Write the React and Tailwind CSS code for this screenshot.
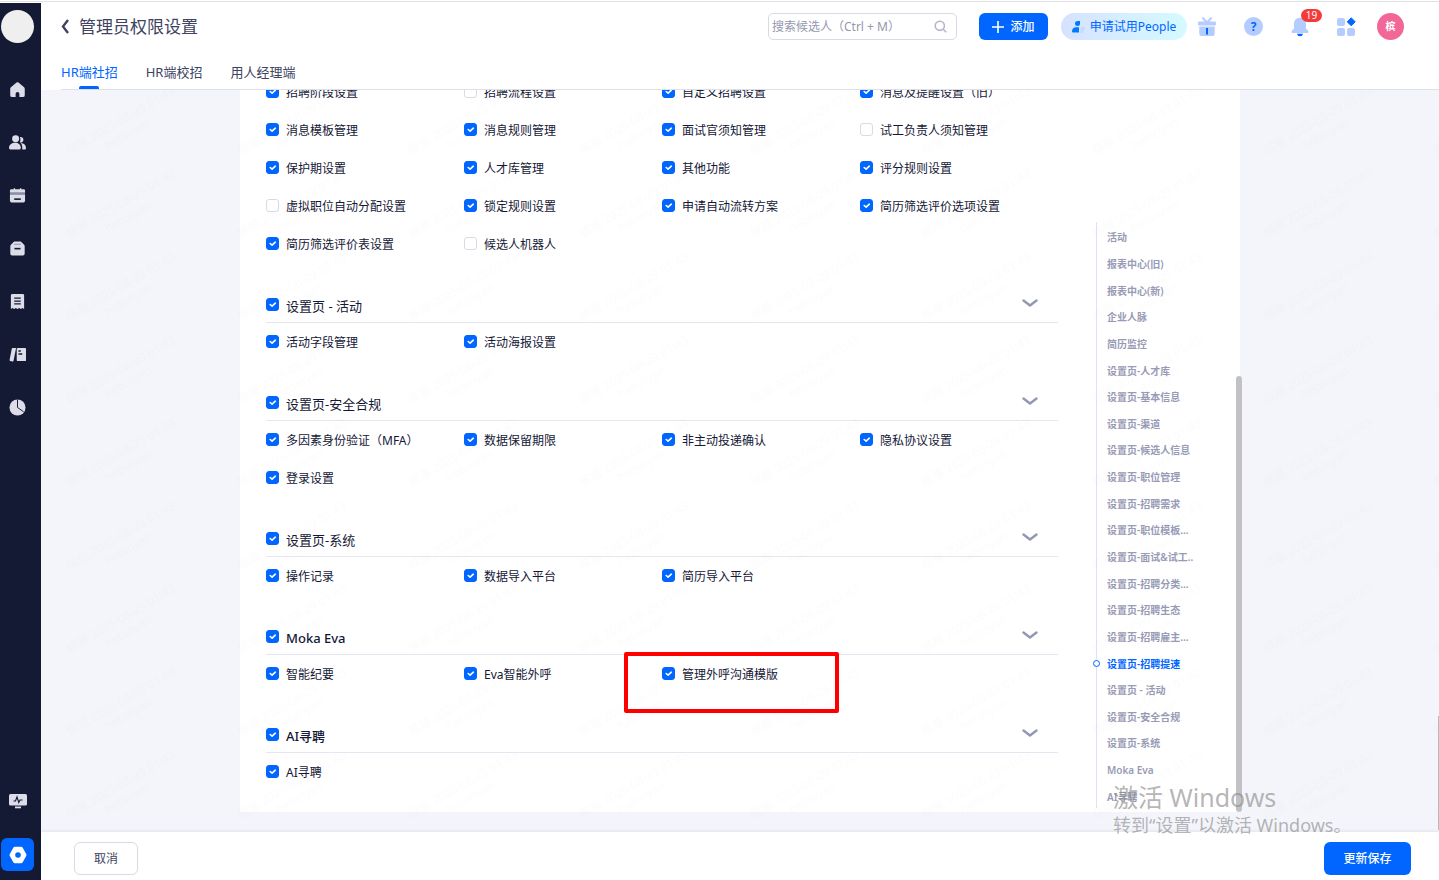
import { useState } from "react";

const FIRST_ROWS = [
  ["招聘阶段设置", true],
  ["招聘流程设置", false],
  ["自定义招聘设置", true],
  ["消息及提醒设置（旧）", true],
  ["消息模板管理", true],
  ["消息规则管理", true],
  ["面试官须知管理", true],
  ["试工负责人须知管理", false],
  ["保护期设置", true],
  ["人才库管理", true],
  ["其他功能", true],
  ["评分规则设置", true],
  ["虚拟职位自动分配设置", false],
  ["锁定规则设置", true],
  ["申请自动流转方案", true],
  ["简历筛选评价选项设置", true],
  ["简历筛选评价表设置", true],
  ["候选人机器人", false],
];

const SECTIONS = [
  { title: "设置页 - 活动", items: ["活动字段管理", "活动海报设置"] },
  {
    title: "设置页-安全合规",
    items: [
      "多因素身份验证（MFA）",
      "数据保留期限",
      "非主动投递确认",
      "隐私协议设置",
      "登录设置",
    ],
  },
  {
    title: "设置页-系统",
    items: ["操作记录", "数据导入平台", "简历导入平台"],
  },
  {
    title: "Moka Eva",
    items: ["智能纪要", "Eva智能外呼", "管理外呼沟通模版"],
  },
  { title: "AI寻聘", items: ["AI寻聘"] },
];

const ANCHORS = [
  "活动",
  "报表中心(旧)",
  "报表中心(新)",
  "企业人脉",
  "简历监控",
  "设置页-人才库",
  "设置页-基本信息",
  "设置页-渠道",
  "设置页-候选人信息",
  "设置页-职位管理",
  "设置页-招聘需求",
  "设置页-职位模板...",
  "设置页-面试&试工..",
  "设置页-招聘分类...",
  "设置页-招聘生态",
  "设置页-招聘雇主...",
  "设置页-招聘提速",
  "设置页 - 活动",
  "设置页-安全合规",
  "设置页-系统",
  "Moka Eva",
  "AI寻聘",
];

const TABS = ["HR端社招", "HR端校招", "用人经理端"];

const MENU = [
  {
    label: "首页",
    icon: (
      <path d="M9 1.2a1.6 1.6 0 0 1 1 .4l6 5a2 2 0 0 1 .7 1.5V15a2 2 0 0 1-2 2H11v-3.4a2 2 0 0 0-4 0V17H3.300a2 2 0 0 1-2-2V8.100A2 2 0 0 1 2 6.600l6-5a1.600 1.600 0 0 1 1-.4z" />
    ),
  },
  {
    label: "候选人",
    icon: (
      <>
        <circle cx="7" cy="5" r="3.700" />
        <path d="M0 14.500C0 11.500 3 9.300 6.500 9.300s6 2.200 6 5.200c0 1.200-.6 2-1.500 2H1.700c-.9 0-1.700-.8-1.700-2z" />
        <path d="M11.500 3.200a3 3 0 1 1 0 5.800c.8-1.900.8-3.900 0-5.800z" />
        <path d="M12.500 9.500c3.500.3 5.500 2.500 5.500 5.200 0 .9-.5 1.800-1.300 1.800H14c.3-2.500 0-5-1.500-7z" />
      </>
    ),
  },
  {
    label: "日程",
    icon: (
      <>
        <path d="M2.500 2.300H5V1.300h1.500v1h5v-1H13v1h2.500A1.500 1.500 0 0 1 17 3.800V6H1V3.800a1.500 1.500 0 0 1 1.500-1.500z" />
        <path d="M1 6h16v2H1z" fill="#8a8cad" />
        <path d="M1 8h16v6.500a1.800 1.800 0 0 1-1.800 1.800H2.800A1.800 1.800 0 0 1 1 14.500z" />
        <path d="M5.500 12h7v1.700h-7z" fill="#141a33" />
      </>
    ),
  },
  {
    label: "职位",
    icon: (
      <>
        <path d="M5.500 1.500h7L16 5a2 2 0 0 1 .6 1.500V14.500A1.800 1.800 0 0 1 14.800 16.300H3.200A1.800 1.800 0 0 1 1.400 14.500V6.500A2 2 0 0 1 2 5z" />
        <path d="M5.500 4h7v1h-7z" fill="#8a8cad" />
        <path d="M5.800 8.300h6.400V10H5.800z" fill="#141a33" />
      </>
    ),
  },
  {
    label: "需求",
    icon: (
      <>
        <path d="M3.500 1h11A1.500 1.500 0 0 1 16 2.500V17l-1.800-1.200L12.500 17l-1.700-1.200L9 17l-1.800-1.200L5.500 17l-1.700-1.200L2 17V2.500A1.500 1.500 0 0 1 3.500 1z" />
        <path
          d="M5.500 5.500h7M5.500 8.500h7M5.500 11.500h7"
          stroke="#141a33"
          strokeWidth="1.300"
        />
      </>
    ),
  },
  {
    label: "人才库",
    icon: (
      <>
        <path d="M3.800 2h3.700L4.800 15.500a1 1 0 0 1-1.200.8l-2.400-.5a.8.8 0 0 1-.6-1L3 2.700A1 1 0 0 1 3.800 2z" />
        <path d="M9.200 2H17a1 1 0 0 1 1 1v12a1 1 0 0 1-1 1H9.200a1 1 0 0 1-1-1V3a1 1 0 0 1 1-1z" />
        <path
          d="M10 5.300h2.500M10 8.500h4"
          stroke="#141a33"
          strokeWidth="1.500"
        />
      </>
    ),
  },
  {
    label: "报表",
    icon: (
      <>
        <circle cx="9" cy="9" r="8.500" />
        <path
          d="M9 .5V9l6.500 4.500"
          fill="none"
          stroke="#141a33"
          strokeWidth="1"
        />
      </>
    ),
  },
];

function Check({ id, label, checked, title }) {
  // Latin titles come out too thin at the normal weight
  const weight = /^[A-Za-z]/.test(label) ? "font-medium" : "font-normal";

  return (
    <label
      htmlFor={id}
      className="flex cursor-pointer items-center gap-[7px] whitespace-nowrap"
    >
      <span className="grid size-[13px] shrink-0">
        <input
          id={id}
          type="checkbox"
          defaultChecked={checked}
          className="peer col-start-1 row-start-1 size-[13px] appearance-none rounded-[3px] border border-[#d9dae6] bg-white checked:border-[#0066ff] checked:bg-[#0066ff]"
        />
        <svg
          viewBox="0 0 13 13"
          className="pointer-events-none invisible col-start-1 row-start-1 size-[13px] peer-checked:visible"
          fill="none"
          stroke="#fff"
          strokeWidth="1.600"
          strokeLinecap="round"
          strokeLinejoin="round"
        >
          <path d="M4.200 6.500l1.900 1.700 3.200-3" />
        </svg>
      </span>
      <span
        className={
          title
            ? `pt-[2px] text-[13px] leading-5 ${weight}`
            : "pt-[3px] text-xs leading-4"
        }
      >
        {label}
      </span>
    </label>
  );
}

function Section({ section, index }) {
  return (
    <section className="mt-[26px]">
      <div className="flex h-9 items-center justify-between border-b border-[#e5e6f0] pr-5">
        <Check id={`section-${index}`} label={section.title} checked title />
        <button type="button" aria-label={`收起 ${section.title}`} className="pb-[2px]">
          <svg
            viewBox="0 0 16 9"
            className="h-[9px] w-4"
            fill="none"
            stroke="#9497b4"
            strokeWidth="2.400"
            strokeLinecap="round"
            strokeLinejoin="round"
          >
            <path d="M1.500 1.500L8 6.500l6.500-5" />
          </svg>
        </button>
      </div>
      <div className="grid grid-cols-4 gap-y-[2px]">
        {section.items.map((item, i) => (
          <div key={item} className="relative flex h-9 items-center">
            <Check id={`item-${index}-${i}`} label={item} checked />
            {item === "管理外呼沟通模版" && (
              <div className="pointer-events-none absolute -top-[3px] -left-[38px] h-[61px] w-[215px] rounded-[2px] border-4 border-[#ff0000]" />
            )}
          </div>
        ))}
      </div>
    </section>
  );
}

// Faint repeated user name and time over the content area
function Watermark() {
  return (
    <svg
      className="pointer-events-none absolute inset-0 size-full"
      aria-hidden="true"
    >
      <defs>
        <pattern
          id="mark"
          width="171"
          height="83"
          patternUnits="userSpaceOnUse"
        >
          <g
            fill="#000"
            fillOpacity="0.012"
            fontSize="12"
            textAnchor="middle"
          >
            {[-83, 0, 83].map((dy) => (
              <g key={dy} transform={`translate(82 ${34 + dy}) rotate(-30)`}>
                <text>槟雁 2025-08-29 01:43</text>
                <text y="15">hebinyan</text>
              </g>
            ))}
          </g>
        </pattern>
      </defs>
      <rect width="100%" height="100%" fill="url(#mark)" />
    </svg>
  );
}

function Sidebar() {
  return (
    <aside className="flex w-[41px] shrink-0 flex-col items-center bg-[#141a33] pt-[7px] pr-[6px] pb-[9px]">
      <div className="size-[33px] shrink-0 rounded-full bg-[#efefef]" />
      <nav className="mt-[38px] flex flex-col gap-9">
        {MENU.map((item) => (
          <a key={item.label} href="#" aria-label={item.label}>
            <svg viewBox="0 0 18 18" className="size-[17px]" fill="#dcdde8">
              {item.icon}
            </svg>
          </a>
        ))}
      </nav>
      <a href="#" aria-label="系统状态" className="mt-auto">
        <svg viewBox="0 0 18 16" className="h-4 w-[18px]" fill="#dcdde8">
          <rect x="0" y="1" width="18" height="11.500" rx="1.500" />
          <rect x="6" y="13.500" width="6" height="1.800" />
          <path
            d="M4.500 8h2L8 4l1.800 5.500L11 7h2.500"
            fill="none"
            stroke="#141a33"
            strokeWidth="1.100"
          />
        </svg>
      </a>
      <a
        href="#"
        aria-label="设置"
        className="mt-[29px] flex size-[33px] shrink-0 items-center justify-center rounded-md bg-[#0066ff]"
      >
        <svg viewBox="0 0 18 18" className="size-[18px]" fill="#fff">
          <path d="M6 .8h6a2 2 0 0 1 1.700 1L17.200 8a2 2 0 0 1 0 2l-3.500 6.200a2 2 0 0 1-1.700 1H6a2 2 0 0 1-1.700-1L.8 10a2 2 0 0 1 0-2l3.500-6.200A2 2 0 0 1 6 .8z" />
          <circle cx="9" cy="9" r="2.800" fill="#0066ff" />
        </svg>
      </a>
    </aside>
  );
}

function HeaderIcons() {
  return (
    <div className="ml-[11px] flex items-center gap-7">
      <button type="button" aria-label="礼物">
        <svg viewBox="0 0 18 20" className="h-5 w-[18px]" fill="#b5ccff">
          <path
            d="M9 5.500L5 1.200M9 5.500l4-4.300"
            stroke="#b5ccff"
            strokeWidth="2"
            strokeLinecap="round"
          />
          <rect x="0" y="4.500" width="18" height="4" rx="1.200" />
          <path d="M1.300 9.500h15.400V17a2 2 0 0 1-2 2H3.300a2 2 0 0 1-2-2z" />
          <rect x="8" y="11" width="2" height="6.500" fill="#0066ff" />
        </svg>
      </button>
      <button
        type="button"
        aria-label="帮助"
        className="flex size-[19px] items-center justify-center rounded-full bg-[#b5ccff] text-xs leading-4 font-bold text-[#0066ff]"
      >
        ?
      </button>
      <button type="button" aria-label="通知" className="relative">
        <svg viewBox="0 0 18 20" className="h-5 w-[18px]" fill="#b5ccff">
          <path d="M9 .8c3.900 0 6 2.800 6 6.400v4.300l2.300 2.600c.7.800.3 1.900-.8 1.900h-15c-1.100 0-1.500-1.100-.8-1.900L3 11.500V7.200C3 3.600 5.100.8 9 .8z" />
          <path d="M6 16.700h6A3 3 0 0 1 9 19.300a3 3 0 0 1-3-2.600z" fill="#0066ff" />
        </svg>
        <span className="absolute -top-2 left-[10px] flex h-[13px] w-[21px] items-center justify-center rounded-full bg-[#f53a3a] text-[10px] leading-3 text-white">
          19
        </span>
      </button>
      <button type="button" aria-label="应用">
        <svg viewBox="0 0 19 19" className="size-[19px]" fill="#b5ccff">
          <rect x="0" y="1" width="8" height="8" rx="2" />
          <rect x="0" y="11" width="8" height="8" rx="2" />
          <rect x="10" y="11" width="8" height="8" rx="2" />
          <path
            d="M14.200.8l4 4-4 4-4-4z"
            fill="#0066ff"
            stroke="#0066ff"
            strokeLinejoin="round"
          />
        </svg>
      </button>
    </div>
  );
}

function Header() {
  const [tab, setTab] = useState(TABS[0]);

  return (
    <header className="shrink-0 bg-white pl-5">
      <div className="flex h-[47px] items-center pr-[35px]">
        <button type="button" aria-label="返回" className="w-[18px]">
          <svg
            viewBox="0 0 8 15"
            className="h-[15px] w-2"
            fill="none"
            stroke="#40435f"
            strokeWidth="2.400"
          >
            <path d="M7 1L2 7.500 7 14" />
          </svg>
        </button>
        <h1 className="text-[17px] leading-6 text-[#40435f]">管理员权限设置</h1>
        <div className="ml-auto flex h-[27px] w-[189px] items-center rounded-[5px] border border-[#d9dae8] pr-[9px] pl-[3px]">
          <input
            type="text"
            aria-label="搜索候选人"
            placeholder="搜索候选人（Ctrl + M）"
            className="min-w-0 flex-1 text-xs leading-4 outline-none placeholder:text-[#9497ae]"
          />
          <svg
            viewBox="0 0 13 13"
            className="size-[13px]"
            fill="none"
            stroke="#b4b6cb"
            strokeWidth="1.600"
          >
            <circle cx="5.800" cy="5.800" r="4.600" />
            <path d="M9.200 9.200l3 3" />
          </svg>
        </div>
        <button
          type="button"
          className="ml-[22px] flex h-[27px] w-[69px] items-center justify-center gap-[6px] rounded-md bg-[#0066ff] text-xs font-medium text-white"
        >
          <svg viewBox="0 0 12 12" className="size-3" stroke="#fff" strokeWidth="1.600">
            <path d="M6 0v12M0 6h12" />
          </svg>
          添加
        </button>
        <button
          type="button"
          className="ml-[13px] flex h-[27px] w-[126px] items-center justify-center gap-[5px] rounded-full bg-linear-to-r from-[#d6e2ff] to-[#d5faff] text-xs whitespace-nowrap text-[#0066ff]"
        >
          <svg viewBox="0 0 13 12" className="h-3 w-[13px]" fill="#007bff">
            <path d="M5.500 0H8v2.500A2.500 2.500 0 1 1 5.500 0z" />
            <path d="M0 10.500C0 8 1.500 6.300 4 6.300h3V11.500H1A1 1 0 0 1 0 10.500z" />
            <path
              d="M8.500 7H13M8.500 9h3.500M8.500 11h2.500"
              stroke="#b5ccff"
            />
          </svg>
          申请试用People
        </button>
        <HeaderIcons />
        <button
          type="button"
          className="ml-[21px] size-[27px] rounded-full bg-[#f26798] text-[10px] font-bold text-white"
        >
          槟
        </button>
      </div>
      <nav className="flex h-10 gap-7 border-b border-[#dfdfe8]">
        {TABS.map((name) => (
          <button
            key={name}
            type="button"
            onClick={() => setTab(name)}
            className={`flex flex-col items-center justify-between pt-3 text-[13px] leading-5 ${
              tab === name ? "text-[#0066ff]" : "text-[#40435f]"
            }`}
          >
            {name}
            {tab === name && (
              <span className="h-[3px] w-5 rounded-t-[2px] bg-[#0066ff]" />
            )}
          </button>
        ))}
      </nav>
    </header>
  );
}

function Anchors() {
  return (
    <nav className="mb-1 ml-[38px] flex h-[586px] w-[100px] flex-col border-l border-[#e0e2f2] text-[10px] font-semibold">
      {ANCHORS.map((name, i) => {
        const active = name === "设置页-招聘提速";
        return (
          <a
            key={name + i}
            href="#"
            className={`relative flex flex-1 items-center pt-1 pl-[10px] leading-3 whitespace-nowrap ${
              active ? "text-[#0066ff]" : "text-[#989bb5]"
            }`}
          >
            {active && (
              <span className="absolute -left-1 size-[7px] rounded-full border border-[#0066ff] bg-white" />
            )}
            {name}
          </a>
        );
      })}
    </nav>
  );
}

export default function App() {
  return (
    <div className="relative flex h-screen flex-col overflow-hidden bg-white font-['Noto_Sans','Noto_Sans_CJK_SC',sans-serif] text-[#141736]">
      <div className="mt-px h-[2px] shrink-0 border-t border-[#e2e2e4]" />
      <div className="flex min-h-0 flex-1">
        <Sidebar />
        <div className="flex min-w-0 flex-1 flex-col">
          <Header />
          <main className="relative flex min-h-0 flex-1 flex-col justify-end overflow-hidden bg-[#f4f5fb] pb-5">
            <div className="relative mx-auto flex w-full max-w-[1000px] items-end bg-white pl-[26px]">
              <div className="w-[792px] pb-[23px]">
                <div className="grid grid-cols-4 gap-y-[2px]">
                  {FIRST_ROWS.map(([label, checked], i) => (
                    <div key={label} className="flex h-9 items-center">
                      <Check id={`first-${i}`} label={label} checked={checked} />
                    </div>
                  ))}
                </div>
                {SECTIONS.map((section, i) => (
                  <Section key={section.title} section={section} index={i} />
                ))}
              </div>
              <Anchors />
              <div className="absolute -right-[2px] bottom-0 h-[436px] w-[6px] rounded-full bg-[#c2c2c4]" />
            </div>
            <Watermark />
            <div className="absolute right-0 bottom-[2px] h-[114px] w-px bg-[#b8b8bd]" />
          </main>
          <footer className="relative flex h-12 shrink-0 justify-between bg-white pt-[10px] pr-7 pl-[33px] text-xs shadow-[0_-1px_3px_rgba(20,26,51,0.08)]">
            <button
              type="button"
              className="h-[33px] w-16 rounded-md border border-[#d9dae8] text-[#40435f]"
            >
              取消
            </button>
            <button
              type="button"
              className="h-[33px] w-[87px] rounded-md bg-[#0066ff] font-medium text-white"
            >
              更新保存
            </button>
          </footer>
        </div>
      </div>
      <div className="pointer-events-none absolute right-[87px] bottom-[43px] w-[239px] whitespace-nowrap text-[#8c8c8c]/65">
        <p className="text-[25px] leading-8">激活 Windows</p>
        <p className="text-lg leading-6">转到“设置”以激活 Windows。</p>
      </div>
    </div>
  );
}
